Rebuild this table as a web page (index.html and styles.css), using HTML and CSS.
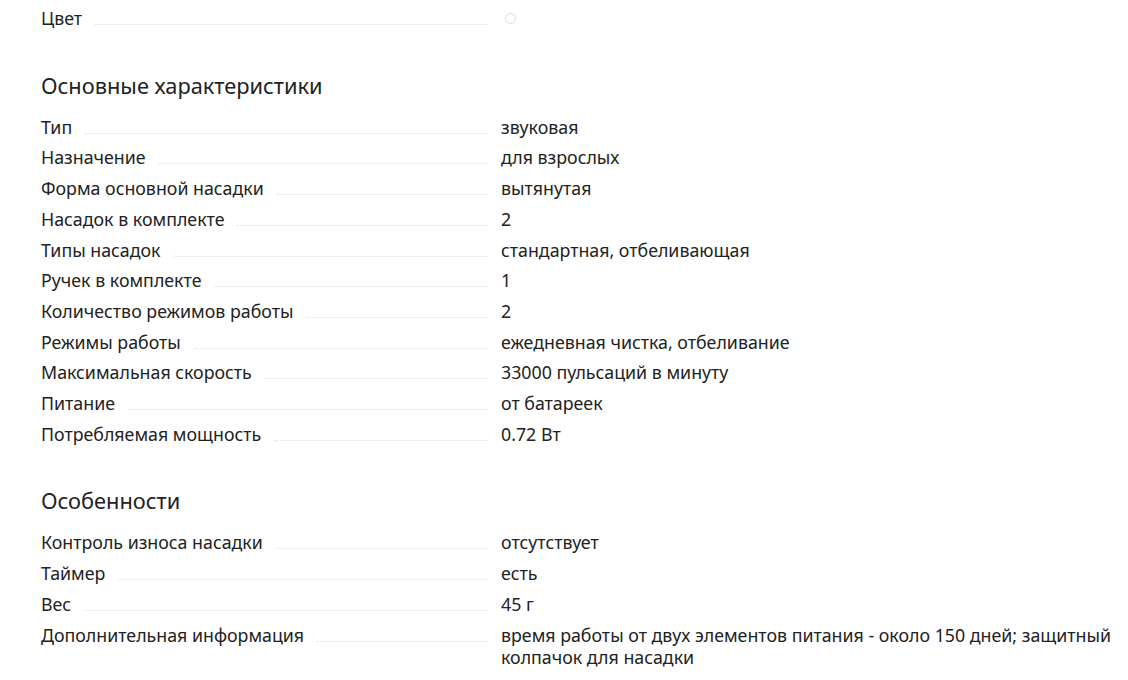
FILE: index.html
```html
<!DOCTYPE html>
<html lang="ru">
<head>
  <meta charset="UTF-8" />
  <title>Характеристики</title>
  <link rel="stylesheet" href="styles.css">
</head>
<body>
  <div class="specs">
    <div class="spec-group">
      <div class="spec-row">
        <div class="spec-name"><span>Цвет</span><i class="dots"></i></div>
        <div class="spec-value"><span class="swatch"></span></div>
      </div>
    </div>

    <div class="spec-group">
      <h2>Основные характеристики</h2>
      <div class="spec-row">
        <div class="spec-name"><span>Тип</span><i class="dots"></i></div>
        <div class="spec-value">звуковая</div>
      </div>
      <div class="spec-row">
        <div class="spec-name"><span>Назначение</span><i class="dots"></i></div>
        <div class="spec-value">для взрослых</div>
      </div>
      <div class="spec-row">
        <div class="spec-name"><span>Форма основной насадки</span><i class="dots"></i></div>
        <div class="spec-value">вытянутая</div>
      </div>
      <div class="spec-row">
        <div class="spec-name"><span>Насадок в комплекте</span><i class="dots"></i></div>
        <div class="spec-value">2</div>
      </div>
      <div class="spec-row">
        <div class="spec-name"><span>Типы насадок</span><i class="dots"></i></div>
        <div class="spec-value">стандартная, отбеливающая</div>
      </div>
      <div class="spec-row">
        <div class="spec-name"><span>Ручек в комплекте</span><i class="dots"></i></div>
        <div class="spec-value">1</div>
      </div>
      <div class="spec-row">
        <div class="spec-name"><span>Количество режимов работы</span><i class="dots"></i></div>
        <div class="spec-value">2</div>
      </div>
      <div class="spec-row">
        <div class="spec-name"><span>Режимы работы</span><i class="dots"></i></div>
        <div class="spec-value">ежедневная чистка, отбеливание</div>
      </div>
      <div class="spec-row">
        <div class="spec-name"><span>Максимальная скорость</span><i class="dots"></i></div>
        <div class="spec-value">33000 пульсаций в минуту</div>
      </div>
      <div class="spec-row">
        <div class="spec-name"><span>Питание</span><i class="dots"></i></div>
        <div class="spec-value">от батареек</div>
      </div>
      <div class="spec-row">
        <div class="spec-name"><span>Потребляемая мощность</span><i class="dots"></i></div>
        <div class="spec-value">0.72 Вт</div>
      </div>
    </div>

    <div class="spec-group">
      <h2>Особенности</h2>
      <div class="spec-row">
        <div class="spec-name"><span>Контроль износа насадки</span><i class="dots"></i></div>
        <div class="spec-value">отсутствует</div>
      </div>
      <div class="spec-row">
        <div class="spec-name"><span>Таймер</span><i class="dots"></i></div>
        <div class="spec-value">есть</div>
      </div>
      <div class="spec-row">
        <div class="spec-name"><span>Вес</span><i class="dots"></i></div>
        <div class="spec-value">45 г</div>
      </div>
      <div class="spec-row">
        <div class="spec-name"><span>Дополнительная информация</span><i class="dots"></i></div>
        <div class="spec-value">время работы от двух элементов питания - около 150 дней; защитный колпачок для насадки</div>
      </div>
    </div>
  </div>
</body>
</html>
```

FILE: styles.css
```css
* {
  box-sizing: border-box;
  margin: 0;
  padding: 0;
}

body {
  background: #ffffff;
  color: #222222;
  font-family: 'Noto Sans', 'Open Sans', sans-serif;
  font-size: 17.8px;
  line-height: 22.7px;
}

.specs {
  padding: 3px 0 0 41px;
}

.spec-group + .spec-group {
  margin-top: 37px;
}

h2 {
  font-size: 21.8px;
  font-weight: 400;
  line-height: 30px;
  margin-bottom: 11px;
}

.spec-row {
  display: grid;
  grid-template-columns: 460px 1fr;
  padding: 4px 0;
}

.spec-name {
  display: flex;
  align-items: baseline;
}

.dots {
  flex: 1;
  margin: 0 14px 0 13px;
  border-bottom: 1px dotted #dedede;
}

.spec-value {
  padding-right: 10px;
}

.swatch {
  display: inline-block;
  width: 11px;
  height: 11px;
  margin: 6px 0 0 4px;
  border: 1px solid #dcdcdc;
  border-radius: 50%;
  vertical-align: top;
}
```
